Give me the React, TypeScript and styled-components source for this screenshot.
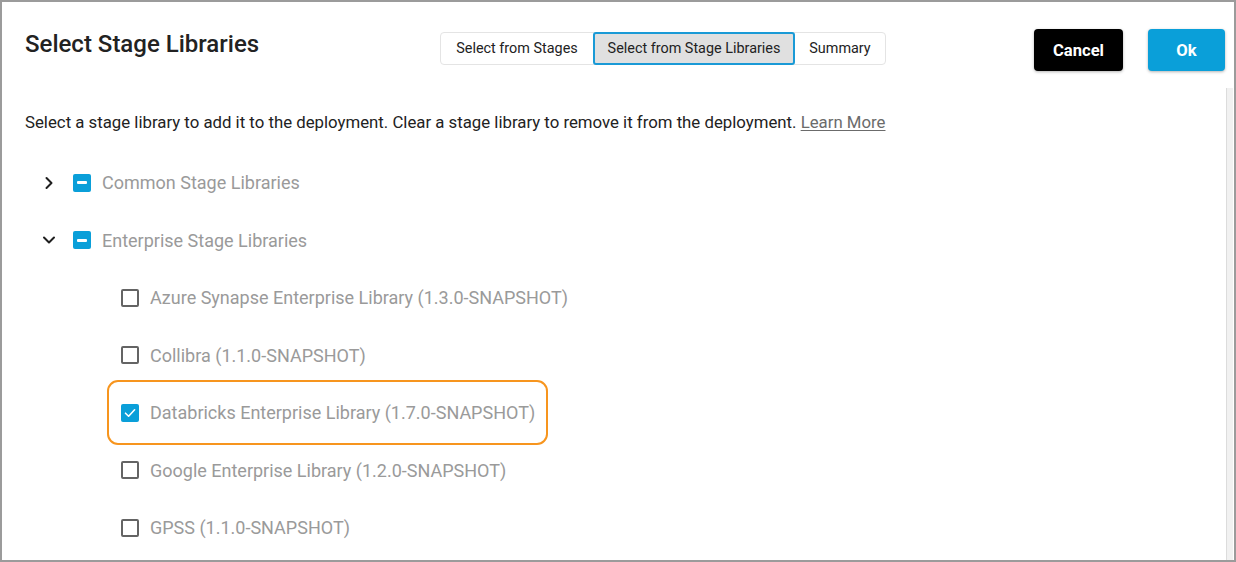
import React, { FC } from "react";
import styled, { createGlobalStyle } from "styled-components";

const GlobalStyle = createGlobalStyle`
  html, body {
    margin: 0;
    padding: 0;
    background: #ffffff;
  }
  body {
    font-family: Roboto, "Liberation Sans", Arial, sans-serif;
    color: #222222;
  }
  * {
    box-sizing: border-box;
  }
`;

const Dialog = styled.div`
  width: 1236px;
  height: 562px;
  border: 2px solid #9b9b9b;
  background: #ffffff;
  display: flex;
  flex-direction: column;
  overflow: hidden;
`;

const Header = styled.div`
  display: flex;
  align-items: flex-start;
  padding: 27px 9px 0 23px;
  height: 86px;
  flex-shrink: 0;
`;

const Title = styled.h1`
  width: 415px;
  margin: 0;
  font-size: 24px;
  font-weight: 500;
  line-height: 30px;
  color: #222222;
`;

const Tabs = styled.div`
  display: flex;
  margin-top: 3px;
  height: 33px;
  border: 1px solid #e4e4e4;
  border-radius: 4px;
  background: #ffffff;
`;

const Tab = styled.button<{ $active?: boolean; $width: number }>`
  width: ${(p) => p.$width}px;
  margin: ${(p) => (p.$active ? "-1px 0" : "0")};
  height: ${(p) => (p.$active ? "33px" : "31px")};
  padding: 0;
  border: ${(p) => (p.$active ? "2px solid #1a9ad6" : "none")};
  border-radius: 3px;
  background: ${(p) => (p.$active ? "#e0e0e0" : "transparent")};
  font-family: Roboto, "Liberation Sans", Arial, sans-serif;
  font-size: 14.4px;
  color: #222222;
  cursor: pointer;
`;

const Spacer = styled.div`
  flex: 1;
`;

const Actions = styled.div`
  display: flex;
  gap: 25px;
`;

const ActionButton = styled.button<{ $primary?: boolean }>`
  height: 42px;
  width: ${(p) => (p.$primary ? "77px" : "89px")};
  border: none;
  border-radius: 4px;
  background: ${(p) => (p.$primary ? "#0a9fd9" : "#000000")};
  color: #ffffff;
  font-family: Roboto, "Liberation Sans", Arial, sans-serif;
  font-size: 16.6px;
  font-weight: 700;
  box-shadow: 0 1px 3px rgba(0, 0, 0, 0.3);
  cursor: pointer;
`;

const Body = styled.div`
  flex: 1;
  display: flex;
  min-height: 0;
`;

const Content = styled.div`
  flex: 1;
  padding: 22px 0 0 23px;
  overflow: hidden;
`;

const Track = styled.div`
  width: 7px;
  margin-right: 1px;
  background: #f1f1f1;
  border-left: 1px solid #dcdcdc;
`;

const Intro = styled.p`
  margin: 0 0 20px;
  font-size: 16.8px;
  line-height: 24px;
  color: #222222;
`;

const LearnMore = styled.a`
  color: #6b6b6b;
  text-decoration: underline;
  text-underline-offset: 2px;
`;

const Row = styled.div<{ $depth: number; $highlight?: boolean }>`
  position: relative;
  display: flex;
  align-items: center;
  height: 57.5px;
  padding-left: ${(p) => (p.$depth === 0 ? 14 : 96)}px;

  ${(p) =>
    p.$highlight
      ? `
    &::before {
      content: "";
      position: absolute;
      left: 82px;
      width: 437px;
      top: -4px;
      bottom: -3px;
      border: 2px solid #f7951e;
      border-radius: 11px;
      pointer-events: none;
    }
  `
      : ""}
`;

const Chevron = styled.span`
  width: 20px;
  height: 24px;
  margin-right: 14px;
  display: flex;
  align-items: center;
  justify-content: center;
`;

const Box = styled.span<{ $state: "on" | "off" | "mixed" }>`
  width: 18px;
  height: 18px;
  border-radius: 2px;
  flex-shrink: 0;
  display: flex;
  align-items: center;
  justify-content: center;
  background: ${(p) => (p.$state === "off" ? "#ffffff" : "#0a9fd9")};
  border: ${(p) => (p.$state === "off" ? "2px solid #646464" : "none")};
`;

const Dash = styled.span`
  width: 10px;
  height: 3px;
  background: #ffffff;
  border-radius: 1px;
`;

const Label = styled.span`
  margin-left: 11px;
  font-size: 18px;
  color: #9a9a9a;
`;

type Item = {
  label: string;
  depth: number;
  state: "on" | "off" | "mixed";
  open?: boolean;
  highlight?: boolean;
};

const items: Item[] = [
  { label: "Common Stage Libraries", depth: 0, state: "mixed", open: false },
  { label: "Enterprise Stage Libraries", depth: 0, state: "mixed", open: true },
  { label: "Azure Synapse Enterprise Library (1.3.0-SNAPSHOT)", depth: 1, state: "off" },
  { label: "Collibra (1.1.0-SNAPSHOT)", depth: 1, state: "off" },
  { label: "Databricks Enterprise Library (1.7.0-SNAPSHOT)", depth: 1, state: "on", highlight: true },
  { label: "Google Enterprise Library (1.2.0-SNAPSHOT)", depth: 1, state: "off" },
  { label: "GPSS (1.1.0-SNAPSHOT)", depth: 1, state: "off" },
];

const ChevronIcon: FC<{ open?: boolean }> = ({ open }) => (
  <svg width="16" height="16" viewBox="0 0 16 16" fill="none">
    {open ? (
      <path d="M3 5.5 L8 10.5 L13 5.5" stroke="#1f1f1f" strokeWidth="2" strokeLinecap="round" strokeLinejoin="round" />
    ) : (
      <path d="M5.5 3 L10.5 8 L5.5 13" stroke="#1f1f1f" strokeWidth="2" strokeLinecap="round" strokeLinejoin="round" />
    )}
  </svg>
);

const CheckIcon = () => (
  <svg width="14" height="14" viewBox="0 0 14 14" fill="none">
    <path d="M2.5 7.2 L5.6 10.2 L11.6 3.8" stroke="#ffffff" strokeWidth="1.6" strokeLinecap="round" strokeLinejoin="round" />
  </svg>
);

const TreeRow: FC<Item> = ({ label, depth, state, open, highlight }) => (
  <Row $depth={depth} $highlight={highlight}>
    {depth === 0 ? (
      <Chevron>
        <ChevronIcon open={open} />
      </Chevron>
    ) : null}
    <Box $state={state}>
      {state === "mixed" ? <Dash /> : null}
      {state === "on" ? <CheckIcon /> : null}
    </Box>
    <Label>{label}</Label>
  </Row>
);

export default function App() {
  return (
    <>
      <GlobalStyle />
      <Dialog>
        <Header>
          <Title>Select Stage Libraries</Title>
          <Tabs>
            <Tab $width={152}>Select from Stages</Tab>
            <Tab $width={202} $active>
              Select from Stage Libraries
            </Tab>
            <Tab $width={90}>Summary</Tab>
          </Tabs>
          <Spacer />
          <Actions>
            <ActionButton>Cancel</ActionButton>
            <ActionButton $primary>Ok</ActionButton>
          </Actions>
        </Header>
        <Body>
          <Content>
            <Intro>
              Select a stage library to add it to the deployment. Clear a stage library to remove it from the
              deployment. <LearnMore href="#">Learn More</LearnMore>
            </Intro>
            {items.map((item) => (
              <TreeRow key={item.label} {...item} />
            ))}
          </Content>
          <Track />
        </Body>
      </Dialog>
    </>
  );
}
